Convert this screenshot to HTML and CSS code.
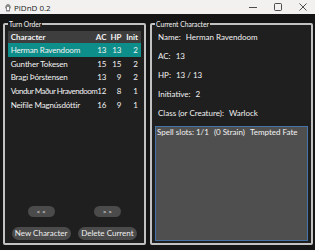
FILE: index.html
```html
<!DOCTYPE html>
<html>
<head>
<meta charset="utf-8">
<link rel="stylesheet" href="styles.css">
</head>
<body>
<div class="window">
  <div class="titlebar">
    <svg class="app-icon" width="8" height="9" viewBox="0 0 8 9">
      <path d="M2 8.5 L2 6 L1 4.5 L2 2 L4 0.8 L6 2 L7 4.5 L6 6 L6 8.5 Z" fill="#8a8a8a"/>
      <path d="M3 4 L5 4 L5 7 L3 7 Z" fill="#ffffff"/>
    </svg>
    <span class="app-title">PiDnD 0.2</span>
    <div class="controls">
      <span class="ctl">
        <svg width="8" height="8" viewBox="0 0 8 8"><path d="M0 4.5 H8" stroke="#222" stroke-width="0.8"/></svg>
      </span>
      <span class="ctl">
        <svg width="8" height="8" viewBox="0 0 8 8"><rect x="0.5" y="0.5" width="7" height="7" rx="1" fill="none" stroke="#222" stroke-width="0.8"/></svg>
      </span>
      <span class="ctl">
        <svg width="8" height="8" viewBox="0 0 8 8"><path d="M0.5 0.5 L7.5 7.5 M7.5 0.5 L0.5 7.5" stroke="#222" stroke-width="0.8"/></svg>
      </span>
    </div>
  </div>
  <div class="main">
    <fieldset class="group turn">
      <legend>Turn Order</legend>
      <table class="order">
        <colgroup>
          <col class="c-name"><col class="c-ac"><col class="c-hp"><col class="c-init">
        </colgroup>
        <thead>
          <tr><th class="name">Character</th><th>AC</th><th>HP</th><th>Init</th></tr>
        </thead>
        <tbody>
          <tr class="sel"><td class="name">Herman Ravendoom</td><td>13</td><td>13</td><td>2</td></tr>
          <tr><td class="name">Gunther Tokesen</td><td>15</td><td>15</td><td>2</td></tr>
          <tr><td class="name">Bragi Þórstensen</td><td>13</td><td>9</td><td>2</td></tr>
          <tr><td class="name fit">Vondur Maður Hravendoom</td><td>12</td><td>8</td><td>1</td></tr>
          <tr><td class="name">Neifile Magnúsdóttir</td><td>16</td><td>9</td><td>1</td></tr>
        </tbody>
      </table>
      <div class="btn-row nav">
        <button class="btn small">&lt; &lt;</button>
        <button class="btn small">&gt; &gt;</button>
      </div>
      <div class="btn-row actions">
        <button class="btn wide">New Character</button>
        <button class="btn wide">Delete Current</button>
      </div>
    </fieldset>
    <fieldset class="group current">
      <legend>Current Character</legend>
      <div class="info">
        <div class="line">Name:<span class="val">Herman Ravendoom</span></div>
        <div class="line">AC:<span class="val">13</span></div>
        <div class="line">HP:<span class="val">13 / 13</span></div>
        <div class="line">Initiative:<span class="val">2</span></div>
        <div class="line">Class (or Creature):<span class="val">Warlock</span></div>
      </div>
      <div class="notes">Spell slots: 1/1<span class="gap"></span>(0 Strain)<span class="gap"></span>Tempted Fate</div>
    </fieldset>
  </div>
</div>
</body>
</html>
```

FILE: styles.css
```css
* { box-sizing: border-box; }
html, body {
  margin: 0;
  padding: 0;
  width: 315px;
  height: 250px;
  overflow: hidden;
  background: #151515;
  font-family: Lato, "Liberation Sans", sans-serif;
  font-size: 8px;
  color: #f2f2f2;
}
.window {
  width: 315px;
  height: 250px;
  display: flex;
  flex-direction: column;
}
.titlebar {
  height: 14px;
  background: #f2f1ef;
  display: flex;
  align-items: center;
  padding-left: 4px;
  color: #1a1a1a;
  flex: none;
}
.app-icon { flex: none; }
.app-title {
  margin-left: 2px;
  font-size: 8px;
  font-family: "Open Sans", sans-serif;
}
.controls {
  margin-left: auto;
  display: flex;
}
.ctl {
  width: 25px;
  height: 14px;
  display: flex;
  align-items: center;
  justify-content: center;
}
.main {
  flex: 1;
  display: flex;
  padding: 4.5px 2px 5.5px 3px;
  gap: 4px;
}
.group {
  margin: 0;
  padding: 0;
  border: 2px solid #c2c2c2;
  border-radius: 2px;
  background: #1f1f1f;
  min-width: 0;
}
.group legend {
  padding: 0 1px;
  margin-left: 0;
  line-height: 10px;
  font-size: 6.7px;
  color: #f2f2f2;
}
.turn {
  width: 142.5px;
  flex: none;
  display: flex;
  flex-direction: column;
  padding: 2.5px 3px 3px 3px;
}
.current {
  flex: 1;
  display: flex;
  flex-direction: column;
  padding: 0 3px 1.5px 3.5px;
}
.order {
  border-collapse: collapse;
  table-layout: fixed;
  width: 132.5px;
}
.c-name { width: 84px; }
.c-ac { width: 15px; }
.c-hp { width: 15px; }
.c-init { width: 18.5px; }
.order th, .order td {
  padding: 0 0.5px 0 0;
  text-align: right;
  white-space: nowrap;
  font-weight: normal;
}
.order th:last-child, .order td:last-child { padding-right: 2.5px; }
.order th {
  height: 12px;
  background: #3e3e3e;
  font-weight: bold;
}
.order td { height: 13.7px; }
.order .name {
  text-align: left;
  padding-left: 2.7px;
  letter-spacing: -0.15px;
}
.order td.fit { letter-spacing: -0.5px; }
.order th.name { letter-spacing: 0; }
.order tr.sel td { background: #0e8e8a; }
.btn-row {
  display: grid;
  grid-template-columns: 1fr 1fr;
  justify-items: center;
}
.nav { margin-top: auto; }
.actions { margin-top: 10px; }
.btn {
  border: none;
  background: #4b4b4b;
  color: #eeeeee;
  font-family: Lato, "Liberation Sans", sans-serif;
  padding: 0;
  border-radius: 7px;
}
.btn.small {
  width: 27px;
  height: 11px;
  font-size: 6.5px;
}
.btn.wide {
  width: 59px;
  height: 13px;
  font-size: 8px;
}
.info {
  padding: 3.5px 0 0 3px;
  display: flex;
  flex-direction: column;
  gap: 9px;
}
.line { line-height: 10px; white-space: nowrap; }
.val { margin-left: 5px; }
.notes {
  margin-top: 8px;
  flex: 1;
  background: #4f4f4f;
  border: 1px solid #4673a6;
  padding: 0 1px;
  line-height: 10px;
  font-size: 8px;
  white-space: nowrap;
}
.gap { display: inline-block; width: 5px; }
```
